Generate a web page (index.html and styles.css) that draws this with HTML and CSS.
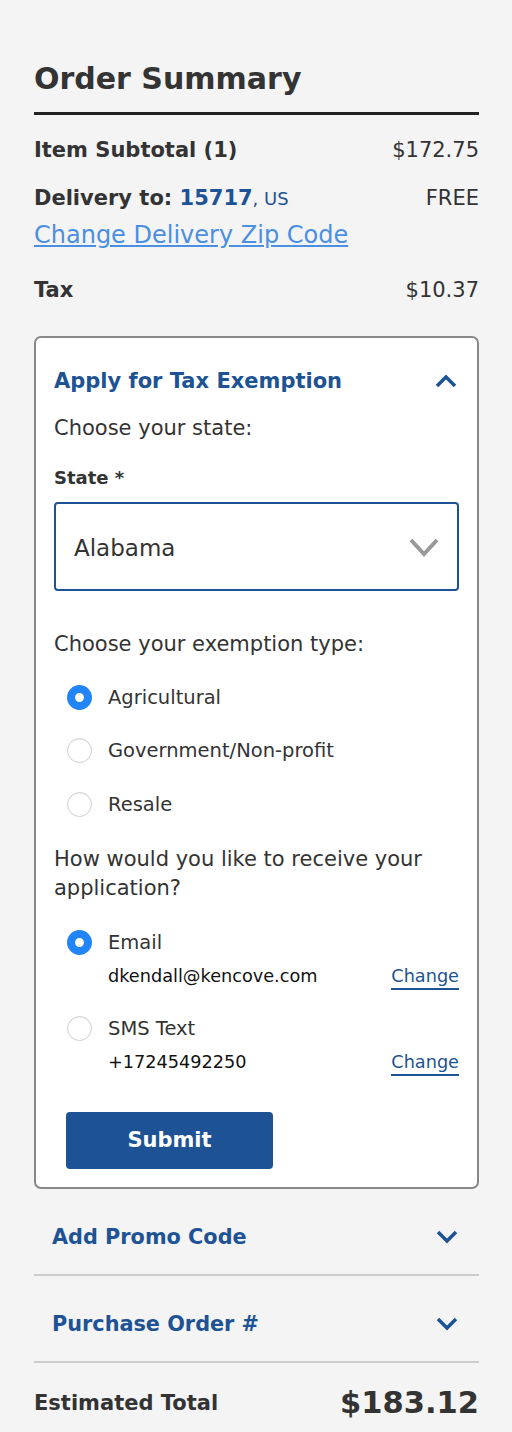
FILE: index.html
```html
<!DOCTYPE html>
<html lang="en">
<head>
  <meta charset="UTF-8">
  <meta name="viewport" content="width=device-width, initial-scale=1.0">
  <title>Order Summary</title>
  <link rel="stylesheet" href="styles.css">
</head>
<body>
  <div class="summary">
      <h1 class="summary-title">Order Summary</h1>

      <div class="row subtotal">
          <span class="row-label">Item Subtotal (1)</span>
          <span class="row-value">$172.75</span>
      </div>

      <div class="row delivery">
          <span class="row-label">Delivery to: <span class="zip">15717</span><span class="country">, US</span></span>
          <span class="row-value">FREE</span>
      </div>
      <a class="zip-link" href="#">Change Delivery Zip Code</a>

      <div class="row tax">
          <span class="row-label">Tax</span>
          <span class="row-value">$10.37</span>
      </div>

      <form class="exemption">
          <div class="exemption-head">
              <h2>Apply for Tax Exemption</h2>
              <svg class="chevron" width="22" height="14" viewBox="0 0 22 14"><polyline points="2,12 11,3 20,12" fill="none" stroke="#1d5394" stroke-width="3.5"/></svg>
          </div>

          <p class="prompt">Choose your state:</p>
          <label class="field-label">State *</label>
          <div class="select">
              <span>Alabama</span>
              <svg width="30" height="22" viewBox="0 0 30 22"><polyline points="2,3 15,17 28,3" fill="none" stroke="#999" stroke-width="4"/></svg>
          </div>

          <p class="prompt">Choose your exemption type:</p>
          <div class="radio-group">
              <label class="radio"><input type="radio" name="type" checked> Agricultural</label>
              <label class="radio"><input type="radio" name="type"> Government/Non-profit</label>
              <label class="radio"><input type="radio" name="type"> Resale</label>
          </div>

          <p class="prompt">How would you like to receive your application?</p>
          <div class="contact-group">
              <div class="contact">
                  <label class="radio"><input type="radio" name="send" checked> Email</label>
                  <div class="contact-line">
                      <span>dkendall@kencove.com</span>
                      <a href="#" class="change">Change</a>
                  </div>
              </div>
              <div class="contact">
                  <label class="radio"><input type="radio" name="send"> SMS Text</label>
                  <div class="contact-line">
                      <span>+17245492250</span>
                      <a href="#" class="change">Change</a>
                  </div>
              </div>
          </div>

          <button type="submit">Submit</button>
      </form>

      <div class="accordion">
          <span>Add Promo Code</span>
          <svg width="22" height="14" viewBox="0 0 22 14"><polyline points="2,2 11,11 20,2" fill="none" stroke="#1d5394" stroke-width="3.5"/></svg>
      </div>
      <div class="accordion">
          <span>Purchase Order #</span>
          <svg width="22" height="14" viewBox="0 0 22 14"><polyline points="2,2 11,11 20,2" fill="none" stroke="#1d5394" stroke-width="3.5"/></svg>
      </div>

      <div class="row total">
          <span class="row-label">Estimated Total</span>
          <span class="row-value">$183.12</span>
      </div>
  </div>
</body>
</html>
```

FILE: styles.css
```css
body {
    margin: 0;
    background-color: #f4f4f4;
    color: #333;
    font-family: 'DejaVu Sans', Verdana, sans-serif;
}

.summary {
    padding: 0 33px 0 34px;
}

.summary-title {
    margin: 0;
    padding: 62px 0 16px;
    font-size: 30px;
    line-height: 34px;
    border-bottom: 3px solid #222;
}

.row {
    display: flex;
    justify-content: space-between;
    align-items: baseline;
    font-size: 21px;
    line-height: 26px;
}

.row-label {
    font-weight: bold;
}

.subtotal {
    margin-top: 22px;
}

.delivery {
    margin-top: 22px;
}

.zip {
    color: #1d5394;
}

.country {
    color: #1d5394;
    font-weight: normal;
    font-size: 18px;
}

.zip-link {
    display: block;
    margin-top: 8px;
    color: #4a8fe2;
    font-size: 24px;
    line-height: 30px;
}

.tax {
    margin-top: 27px;
}

.exemption {
    margin-top: 33px;
    padding: 29px 18px 18px;
    background-color: #fff;
    border: 2px solid #888;
    border-radius: 7px;
}

.exemption-head {
    display: flex;
    justify-content: space-between;
    align-items: center;
}

.exemption-head h2 {
    margin: 0;
    color: #1d5394;
    font-size: 21px;
    line-height: 28px;
}

.exemption-head .chevron {
    margin-right: 2px;
}

.prompt {
    margin: 0;
    font-size: 21px;
    line-height: 29px;
}

.exemption-head + .prompt {
    margin-top: 19px;
}

.field-label {
    display: block;
    margin: 24px 0 13px;
    font-size: 18px;
    font-weight: bold;
    line-height: 22px;
}

.select {
    display: flex;
    justify-content: space-between;
    align-items: center;
    box-sizing: border-box;
    height: 89px;
    padding: 2px 18px 0;
    border: 2px solid #1d5394;
    border-radius: 4px;
    font-size: 23px;
    line-height: 28px;
}

.select + .prompt {
    margin-top: 39px;
}

.radio-group {
    display: flex;
    flex-direction: column;
    gap: 28.5px;
    margin: 25.5px 0 28.5px 12.5px;
}

.radio {
    display: flex;
    align-items: center;
    gap: 16.5px;
    font-size: 19.5px;
    line-height: 25px;
}

.radio input {
    appearance: none;
    -webkit-appearance: none;
    box-sizing: border-box;
    margin: 0;
    width: 25px;
    height: 25px;
    border: 1px solid #cfcfcf;
    border-radius: 50%;
    background: #fff;
    box-shadow: inset 0 1px 1px rgba(0, 0, 0, 0.06);
}

.radio input:checked {
    border: 8px solid #2185f7;
    box-shadow: none;
}

.contact-group {
    margin: 27px 0 0 12.5px;
}

.contact + .contact {
    margin-top: 25.5px;
}

.contact-line {
    display: flex;
    justify-content: space-between;
    align-items: baseline;
    margin-top: 9px;
    padding-left: 41.5px;
    color: #111;
    font-size: 17.7px;
    line-height: 24px;
}

.change {
    color: #1d5394;
    text-decoration: none;
    border-bottom: 2px solid #1d5394;
}

button {
    display: block;
    margin: 36px 0 0 12px;
    width: 207px;
    height: 57px;
    background-color: #1d5394;
    color: white;
    border: none;
    border-radius: 4px;
    font-family: inherit;
    font-size: 21px;
    font-weight: bold;
}

.accordion {
    display: flex;
    justify-content: space-between;
    align-items: center;
    padding: 35px 21px 24px 18px;
    border-bottom: 2px solid #ccc;
    color: #1d5394;
    font-size: 20.8px;
    font-weight: bold;
    line-height: 26px;
}

.total {
    margin-top: 22.5px;
    align-items: center;
}

.total .row-value {
    font-size: 30.5px;
    font-weight: bold;
    line-height: 36px;
}
```
